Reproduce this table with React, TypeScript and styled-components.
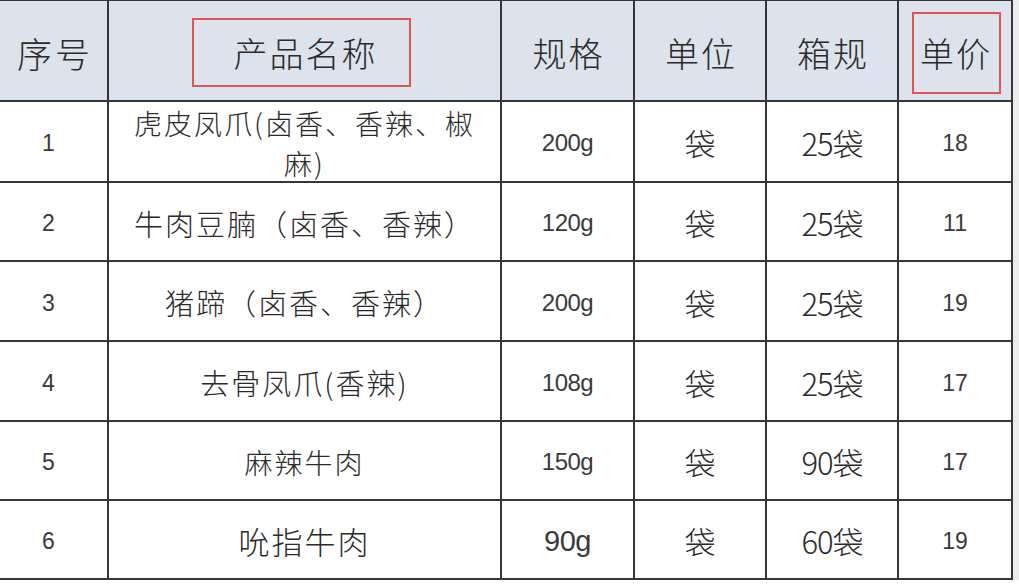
import React from 'react'
import styled, { createGlobalStyle } from 'styled-components'

const GlobalStyle = createGlobalStyle`
  html, body {
    margin: 0;
    padding: 0;
    background: #fff;
  }
  body {
    font-family: "Noto Sans CJK SC", "Liberation Sans", sans-serif;
    color: #2a2a2a;
  }
`

const Page = styled.div`
  display: flex;
  align-items: flex-start;
  width: 1019px;
  height: 584px;
  overflow: hidden;
  background: #fff;
`

const Sheet = styled.div`
  display: grid;
  grid-template-columns: 107px 391px 131px 130px 130px 112px;
  grid-template-rows: 99px 79px 77px 78px 78px 77px 77px;
  gap: 2px;
  background: #363636;
  border-top: 1px solid #363636;
  border-right: 2px solid #363636;
  border-bottom: 2px solid #363636;
`

const Gutter = styled.div`
  width: 6px;
  height: 580px;
  background: #ececec;
`

const HeadCell = styled.div<{ $size?: number; $spacing?: number }>`
  display: flex;
  align-items: center;
  justify-content: center;
  background: #dde3ec;
  color: #2a2a2a;
  font-weight: 300;
  font-size: ${(p) => p.$size ?? 34}px;
  letter-spacing: ${(p) => p.$spacing ?? 2}px;
  padding-left: ${(p) => p.$spacing ?? 2}px;
  padding-top: 4px;
`

const Marked = styled.span<{ $w: number; $h: number; $shift?: number }>`
  display: inline-flex;
  align-items: center;
  justify-content: center;
  box-sizing: border-box;
  width: ${(p) => p.$w}px;
  height: ${(p) => p.$h}px;
  border: 2px solid #e05454;
  padding-left: ${(p) => p.$shift ?? 0}px;
  margin-right: ${(p) => p.$shift ?? 0}px;
`

const Cell = styled.div<{ $size: number; $latin?: boolean; $spacing?: number; $nudge?: number }>`
  display: flex;
  align-items: center;
  justify-content: center;
  text-align: center;
  background: #fff;
  color: ${(p) => (p.$latin ? '#3a3a3a' : '#2a2a2a')};
  font-family: ${(p) =>
    p.$latin ? '"Liberation Sans", "Noto Sans CJK SC", sans-serif' : '"Noto Sans CJK SC", sans-serif'};
  font-weight: ${(p) => (p.$latin ? 400 : 300)};
  font-size: ${(p) => p.$size}px;
  letter-spacing: ${(p) => p.$spacing ?? 0}px;
  line-height: 1.42;
  padding-top: 4px;
  padding-right: ${(p) => p.$nudge ?? 0}px;
`

type Row = {
  no: string
  name: React.ReactNode
  nameSize: number
  spec: string
  specSize: number
  unit: string
  box: string
  price: string
}

const rows: Row[] = [
  {
    no: '1',
    name: (
      <>
        虎皮凤爪(卤香、香辣、椒
        <br />
        麻)
      </>
    ),
    nameSize: 28,
    spec: '200g',
    specSize: 24,
    unit: '袋',
    box: '25袋',
    price: '18',
  },
  { no: '2', name: '牛肉豆腩（卤香、香辣）', nameSize: 29, spec: '120g', specSize: 24, unit: '袋', box: '25袋', price: '11' },
  { no: '3', name: '猪蹄（卤香、香辣）', nameSize: 29, spec: '200g', specSize: 24, unit: '袋', box: '25袋', price: '19' },
  { no: '4', name: '去骨凤爪(香辣)', nameSize: 29, spec: '108g', specSize: 24, unit: '袋', box: '25袋', price: '17' },
  { no: '5', name: '麻辣牛肉', nameSize: 28, spec: '150g', specSize: 24, unit: '袋', box: '90袋', price: '17' },
  { no: '6', name: '吮指牛肉', nameSize: 31, spec: '90g', specSize: 29, unit: '袋', box: '60袋', price: '19' },
]

const App = () => {
  return (
    <Page>
      <GlobalStyle />
      <Sheet>
        <HeadCell $size={35} $spacing={3}>序号</HeadCell>
        <HeadCell>
          <Marked $w={219} $h={69} $shift={8}>产品名称</Marked>
        </HeadCell>
        <HeadCell>规格</HeadCell>
        <HeadCell>单位</HeadCell>
        <HeadCell>箱规</HeadCell>
        <HeadCell>
          <Marked $w={89} $h={82}>单价</Marked>
        </HeadCell>

        {rows.map((r) => (
          <React.Fragment key={r.no}>
            <Cell $size={23} $latin $nudge={10}>{r.no}</Cell>
            <Cell $size={r.nameSize} $spacing={2}>{r.name}</Cell>
            <Cell $size={r.specSize} $latin $spacing={-0.5}>{r.spec}</Cell>
            <Cell $size={31}>{r.unit}</Cell>
            <Cell $size={31} $spacing={-1}>{r.box}</Cell>
            <Cell $size={23} $latin>{r.price}</Cell>
          </React.Fragment>
        ))}
      </Sheet>
      <Gutter />
    </Page>
  )
}

export default App
